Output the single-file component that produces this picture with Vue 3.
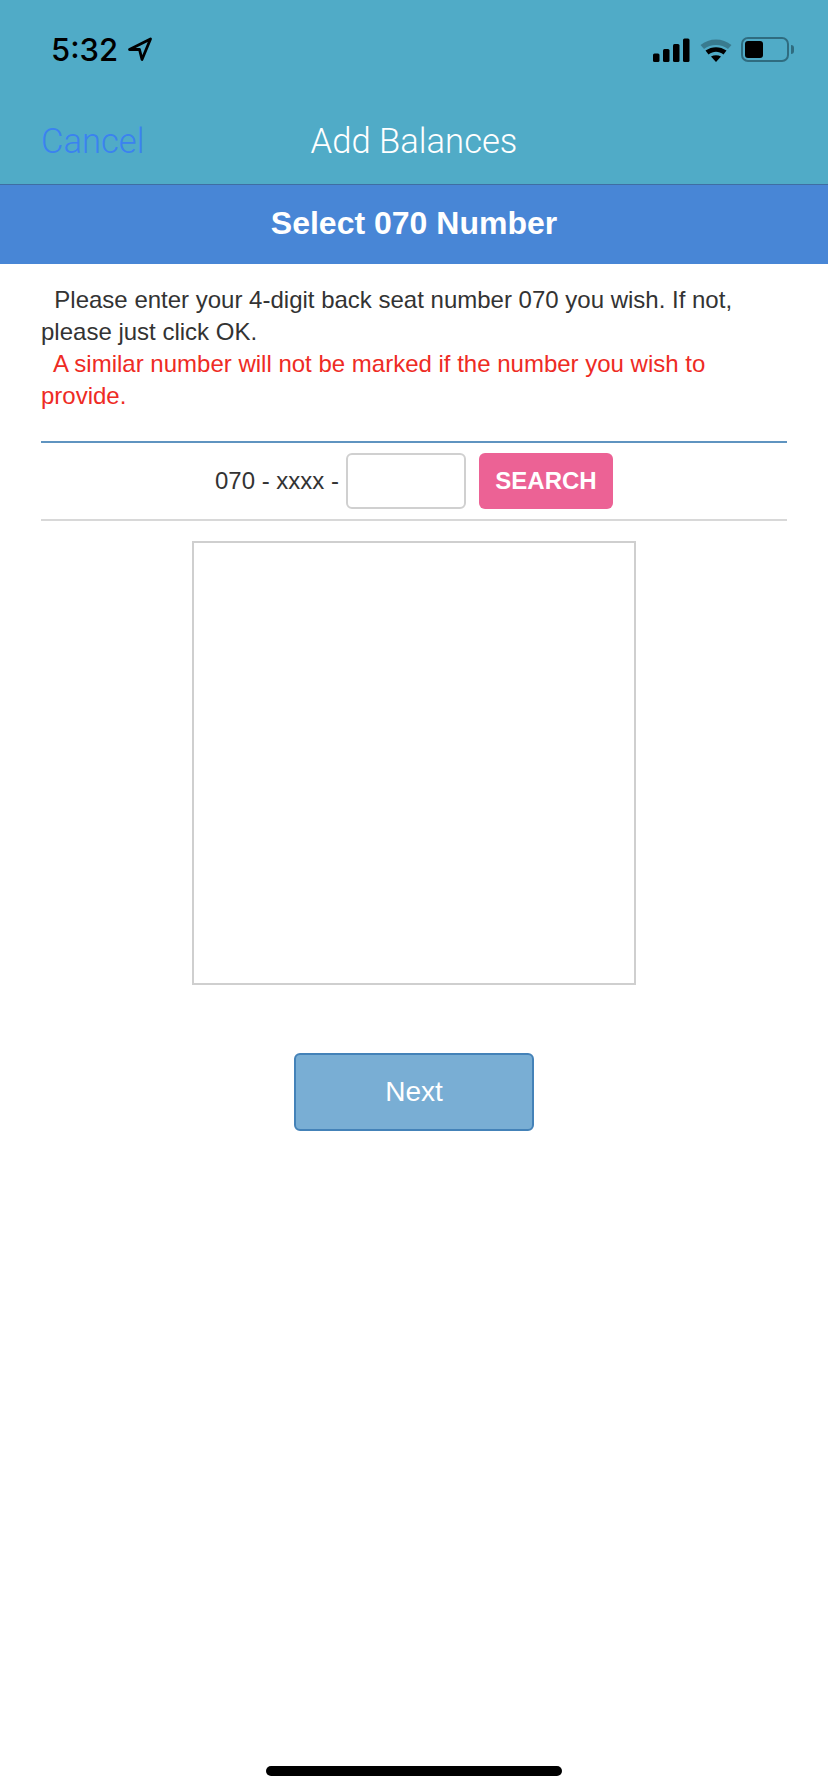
<template>
  <div class="page">
    <header class="top">
      <div class="status">
        <div class="status__left">
          <span class="status__time">5:32</span>
          <svg class="status__loc" width="26" height="26" viewBox="0 0 26 26" aria-hidden="true">
            <path d="M2.5 13.5 L23.5 3 L15 23.5 L12.5 13.5 Z" fill="none" stroke="#000" stroke-width="2.8" stroke-linejoin="round" />
          </svg>
        </div>
        <div class="status__right">
          <svg width="37" height="24" viewBox="0 0 37 24" aria-hidden="true">
            <rect x="0" y="15.5" width="6.5" height="8.5" rx="1.5" />
            <rect x="10" y="11" width="6.5" height="13" rx="1.5" />
            <rect x="20" y="6" width="6.5" height="18" rx="1.5" />
            <rect x="30" y="0.5" width="6.5" height="23.5" rx="1.5" />
          </svg>
          <svg class="status__wifi" width="32" height="24" viewBox="0 0 32 24" aria-hidden="true">
            <path d="M0.5 7 C9 -0.5 23 -0.5 31.5 7 L28 11 C21 5.5 11 5.5 4 11 Z" fill="#000" opacity="0.28" />
            <path d="M5.5 12.5 C12 8 20 8 26.5 12.5 L23.5 16.5 C18.5 12.8 13.5 12.8 8.5 16.5 Z" />
            <path d="M11 18.5 C14 16.8 18 16.8 21 18.5 L16 24 Z" />
          </svg>
          <div class="battery">
            <div class="battery__shell"><div class="battery__level" /></div>
            <div class="battery__cap" />
          </div>
        </div>
      </div>
      <nav class="nav">
        <span class="nav__cancel">Cancel</span>
        <span class="nav__title">Add Balances</span>
      </nav>
    </header>

    <h1 class="band">Select 070 Number</h1>

    <main class="content">
      <p class="intro">&nbsp; Please enter your 4-digit back seat number 070 you wish. If not, please just click OK.</p>
      <p class="intro intro--warn">&nbsp; A similar number will not be marked if the number you wish to provide.</p>

      <div class="search">
        <label class="search__label" for="seat">070 - xxxx -</label>
        <input id="seat" class="search__input" type="text" />
        <button type="button" class="search__btn">SEARCH</button>
      </div>

      <div class="results" />

      <button type="button" class="next">Next</button>
    </main>

    <div class="home" />
  </div>
</template>

<script setup>
</script>

<style>
html,
body {
  margin: 0;
  background: #fff;
}
</style>

<style scoped>
.page {
  position: relative;
  width: 828px;
  height: 1792px;
  overflow: hidden;
  background: #fff;
  font-family: 'Liberation Sans', Arial, sans-serif;
}

.top {
  height: 184px;
  background: #50abc7;
  border-bottom: 1px solid #3f6ea3;
}

.status {
  display: flex;
  justify-content: space-between;
  align-items: center;
  height: 99px;
  padding: 0 34px 0 51px;
}

.status__left {
  display: flex;
  align-items: center;
  gap: 9px;
}

.status__time {
  font-family: Inter, 'Liberation Sans', sans-serif;
  font-size: 31px;
  font-weight: 500;
  color: #000;
}

.status__loc {
  margin-top: -1px;
}

.status__right {
  display: flex;
  align-items: center;
  gap: 10px;
  fill: #000;
}

.status__wifi {
  margin-right: -1px;
}

.battery {
  display: flex;
  align-items: center;
  gap: 2px;
}

.battery__shell {
  box-sizing: border-box;
  width: 48px;
  height: 25px;
  padding: 2px;
  border: 2px solid #2f6c80;
  border-radius: 7px;
}

.battery__level {
  width: 18px;
  height: 17px;
  background: #000;
  border-radius: 3px;
}

.battery__cap {
  width: 3px;
  height: 9px;
  background: #2f6c80;
  border-radius: 0 3px 3px 0;
}

.nav {
  position: relative;
  display: flex;
  align-items: center;
  justify-content: center;
  height: 83px;
  font-family: Roboto, 'Liberation Sans', sans-serif;
  font-size: 34.6px;
  font-weight: 300;
}

.nav__cancel {
  position: absolute;
  left: 41px;
  color: #3b82f0;
}

.nav__title {
  color: #fff;
}

.band {
  margin: 0;
  height: 79px;
  line-height: 77px;
  text-align: center;
  font-size: 32px;
  font-weight: 700;
  color: #fff;
  background: #4886d6;
}

.content {
  display: flex;
  flex-direction: column;
  padding: 20px 41px 0;
}

.intro {
  margin: 0;
  font-size: 24px;
  line-height: 32px;
  color: #333;
}

.intro--warn {
  color: #ee2b24;
}

.search {
  display: flex;
  justify-content: center;
  align-items: center;
  gap: 7px;
  height: 80px;
  margin-top: 29px;
  box-sizing: border-box;
  border-top: 2px solid #5f94c0;
  border-bottom: 2px solid #d8d8d8;
}

.search__label {
  font-size: 24px;
  color: #333;
}

.search__input {
  box-sizing: border-box;
  width: 120px;
  height: 56px;
  margin: 0;
  padding: 0;
  border: 2px solid #d0d0d0;
  border-radius: 6px;
  background: #fff;
}

.search__btn {
  width: 134px;
  height: 56px;
  margin-left: 6px;
  padding: 0;
  border: 0;
  border-radius: 6px;
  background: #ec6295;
  color: #fff;
  font-family: inherit;
  font-size: 24px;
  font-weight: 700;
}

.results {
  box-sizing: border-box;
  width: 444px;
  height: 444px;
  margin: 20px auto 0;
  border: 2px solid #cfcfcf;
}

.next {
  box-sizing: border-box;
  width: 240px;
  height: 78px;
  margin: 68px auto 0;
  border: 2px solid #4482b8;
  border-radius: 6px;
  background: #79aed4;
  color: #fff;
  font-family: inherit;
  font-size: 28px;
}

.home {
  position: absolute;
  left: 266px;
  bottom: 16px;
  width: 296px;
  height: 10px;
  border-radius: 5px;
  background: #000;
}
</style>
